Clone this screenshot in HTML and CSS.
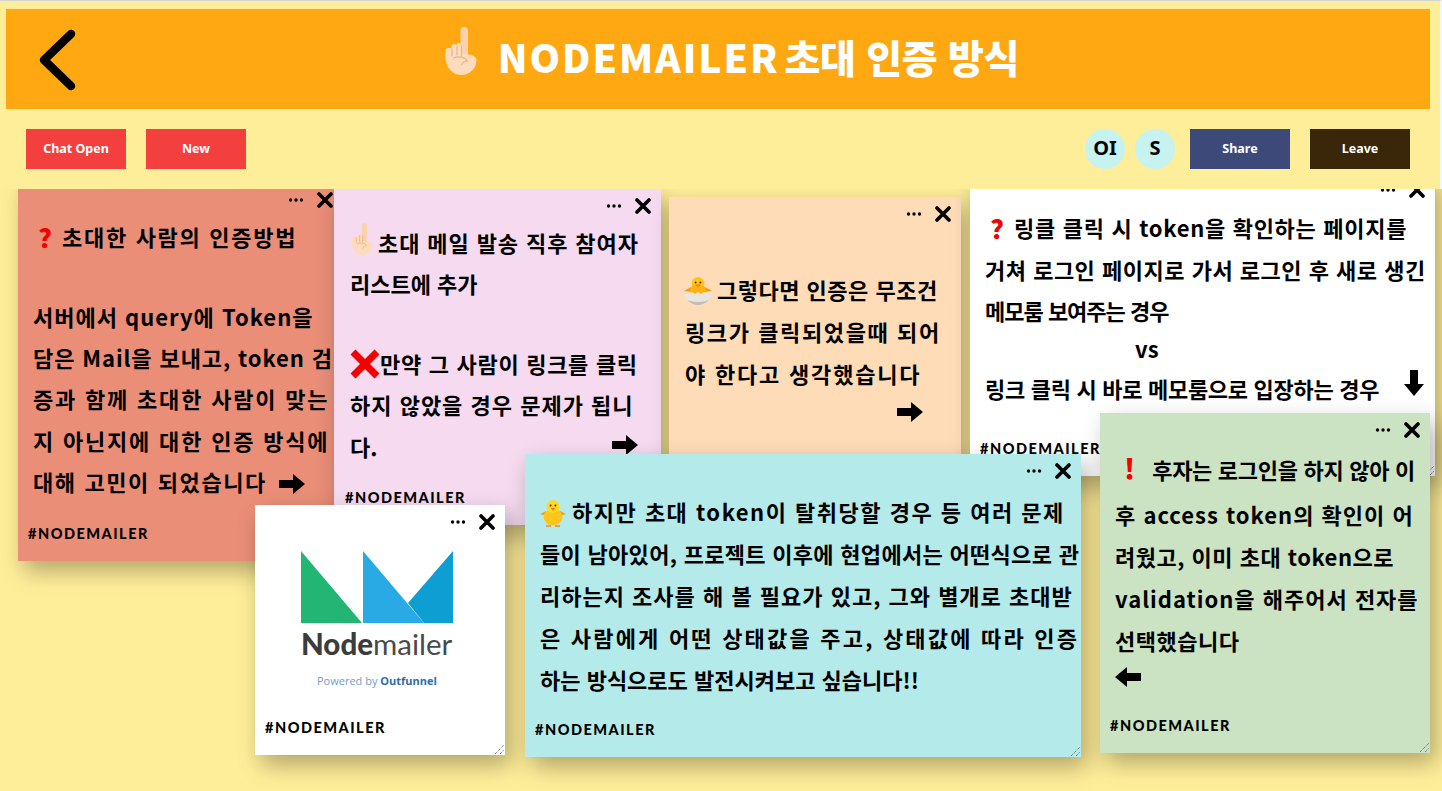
FILE: index.html
```html
<!DOCTYPE html>
<html lang="ko">
<head>
<meta charset="utf-8">
<title>Nodemailer 초대 인증 방식</title>
<link rel="stylesheet" href="styles.css">
</head>
<body>
<svg class="defs" width="0" height="0" aria-hidden="true">
  <defs>
    <symbol id="hand" viewBox="0 0 34 48">
      <rect x="17" y="0" width="7.5" height="30" rx="3.7" fill="#fad2ad"/>
      <rect x="2" y="21" width="7" height="14" rx="3" fill="#fcdcbd"/>
      <rect x="8" y="17" width="5.5" height="14" rx="2.7" fill="#fcdcbd"/>
      <rect x="13" y="16" width="5.5" height="14" rx="2.7" fill="#fcdcbd"/>
      <path d="M2 29c0-2 31-5 31 4 0 9-8 15-15 15C9 48 2 41 2 29z" fill="#fcdcbd"/>
      <path d="M8.5 22v7M13.5 19v9M18 19v10M10 31c5-2 12-1 14 3-3 0-5 1-6 4" fill="none" stroke="#e9b48a" stroke-width="1.2" stroke-linecap="round"/>
    </symbol>
    <symbol id="arrow" viewBox="0 0 26 20">
      <polygon points="0,6 14,6 14,0 26,10 14,20 14,14 0,14" fill="#000"/>
    </symbol>
    <symbol id="cross" viewBox="0 0 30 30">
      <path d="M3 3 27 27M27 3 3 27" stroke="#f40000" stroke-width="7" fill="none"/>
    </symbol>
    <symbol id="chick" viewBox="0 0 30 30">
      <path d="M2 16l6-3 1 5zM28 16l-6-3-1 5z" fill="#f59b10"/>
      <ellipse cx="15" cy="19" rx="9.5" ry="8.5" fill="#ffc61a"/>
      <circle cx="15" cy="8.5" r="6.5" fill="#ffd92a"/>
      <circle cx="12.6" cy="7.5" r="1" fill="#4a3010"/>
      <circle cx="17.4" cy="7.5" r="1" fill="#4a3010"/>
      <path d="M12.6 10h4.8L15 13z" fill="#f47c10"/>
      <path d="M8 28h5M17 28h5" stroke="#ef8a20" stroke-width="1.5"/>
    </symbol>
    <symbol id="hatch" viewBox="0 0 30 30">
      <path d="M1 15l7-4 1 5zM29 15l-7-4-1 5z" fill="#f59b10"/>
      <circle cx="15" cy="7.5" r="6.5" fill="#ffc61a"/>
      <ellipse cx="15" cy="14" rx="8" ry="6" fill="#ffb414"/>
      <circle cx="12.6" cy="6.5" r="1" fill="#4a3010"/>
      <circle cx="17.4" cy="6.5" r="1" fill="#4a3010"/>
      <path d="M12.8 8.5h4.4L15 11.5z" fill="#f47c10"/>
      <path d="M1 17l5 1 3-2 3 2 3-2 3 2 3-2 3 2 5-1c0 7-6 12-14 12S1 24 1 17z" fill="#e9e6e0"/>
      <path d="M4 24c3 3 7 5 11 5s8-2 11-5c-3 1-7 2-11 2s-8-1-11-2z" fill="#c3bdb2"/>
    </symbol>
    <symbol id="menu" viewBox="0 0 16 4">
      <circle cx="2.5" cy="2" r="1.7" fill="#000"/>
      <circle cx="8" cy="2" r="1.7" fill="#000"/>
      <circle cx="13.5" cy="2" r="1.7" fill="#000"/>
    </symbol>
    <symbol id="close" viewBox="0 0 16 16">
      <path d="M2 2 14 14M14 2 2 14" stroke="#000" stroke-width="3.6" stroke-linecap="round" fill="none"/>
    </symbol>
    <symbol id="grip" viewBox="0 0 10 10">
      <path d="M0 9 9 0M5 9 9 5" stroke="#555" stroke-width="1" stroke-dasharray="1 1" fill="none"/>
    </symbol>
  </defs>
</svg>

<div class="top">
  <header class="banner">
    <svg class="back" viewBox="0 0 40 62"><path d="M33 5 6 31 33 57" fill="none" stroke="#000" stroke-width="8.5" stroke-linecap="round" stroke-linejoin="round"/></svg>
    <h1 class="title"><svg class="title-hand"><use href="#hand"/></svg><span class="title-latin">NODEMAILER</span> <span class="title-ko">초대 인증 방식</span></h1>
  </header>
  <div class="toolbar">
    <button class="btn btn-red">Chat Open</button>
    <button class="btn btn-red">New</button>
    <div class="spacer"></div>
    <span class="avatar">OI</span>
    <span class="avatar">S</span>
    <button class="btn btn-share">Share</button>
    <button class="btn btn-leave">Leave</button>
  </div>
</div>

<main class="board">
  <article class="note n1">
    <div class="ctl"><svg class="ic-menu"><use href="#menu"/></svg><svg class="ic-close"><use href="#close"/></svg></div>
    <div class="text">
      <p class="line ls-17 ind"><span class="red-q">?</span>초대한 사람의 인증방법</p>
      <p class="line blank">&nbsp;</p>
      <p class="line ls-10">서버에서 query에 Token을</p>
      <p class="line ls-09">담은 Mail을 보내고, token 검</p>
      <p class="line ls-18">증과 함께 초대한 사람이 맞는</p>
      <p class="line ls-18">지 아닌지에 대한 인증 방식에</p>
      <p class="line ls-16">대해 고민이 되었습니다<svg class="ic-arrow gap-s"><use href="#arrow"/></svg></p>
    </div>
    <div class="tag">#NODEMAILER</div>
    <svg class="grip"><use href="#grip"/></svg>
  </article>

  <article class="note n2">
    <div class="ctl"><svg class="ic-menu"><use href="#menu"/></svg><svg class="ic-close"><use href="#close"/></svg></div>
    <div class="text">
      <p class="line ls-09"><svg class="em-hand"><use href="#hand"/></svg>초대 메일 발송 직후 참여자</p>
      <p class="line">리스트에 추가</p>
      <p class="line blank">&nbsp;</p>
      <p class="line ls-07"><svg class="em-cross"><use href="#cross"/></svg>만약 그 사람이 링크를 클릭</p>
      <p class="line ls-10">하지 않았을 경우 문제가 됩니</p>
      <p class="line last-row">다.<svg class="ic-arrow"><use href="#arrow"/></svg></p>
    </div>
    <div class="tag">#NODEMAILER</div>
  </article>

  <article class="note n3">
    <div class="ctl"><svg class="ic-menu"><use href="#menu"/></svg><svg class="ic-close"><use href="#close"/></svg></div>
    <div class="text">
      <p class="line ls-05"><svg class="em-chick"><use href="#hatch"/></svg>그렇다면 인증은 무조건</p>
      <p class="line ls-16">링크가 클릭되었을때 되어</p>
      <p class="line ls-18">야 한다고 생각했습니다</p>
      <p class="arrow-row"><svg class="ic-arrow"><use href="#arrow"/></svg></p>
    </div>
  </article>

  <article class="note n4">
    <div class="ctl"><svg class="ic-menu"><use href="#menu"/></svg><svg class="ic-close"><use href="#close"/></svg></div>
    <div class="text">
      <p class="line ls-07 ind"><span class="red-q">?</span>링클 클릭 시 token을 확인하는 페이지를</p>
      <p class="line ls-05">거쳐 로그인 페이지로 가서 로그인 후 새로 생긴</p>
      <p class="line ls-m10 tight">메모룸 보여주는 경우</p>
      <p class="line vs">vs</p>
      <p class="line ls-m03 last-row">링크 클릭 시 바로 메모룸으로 입장하는 경우<svg class="ic-down"><use href="#arrow"/></svg></p>
    </div>
    <div class="tag">#NODEMAILER</div>
    <svg class="grip"><use href="#grip"/></svg>
  </article>

  <article class="note n7">
    <div class="ctl"><svg class="ic-menu"><use href="#menu"/></svg><svg class="ic-close"><use href="#close"/></svg></div>
    <div class="logo">
      <svg class="logo-mark" viewBox="0 0 152 72">
        <polygon points="0,0 0,72 61,72" fill="#23b573"/>
        <polygon points="152,0 152,72 123,72 107,52" fill="#0d9fd2"/>
        <polygon points="62,0 62,72 123,72" fill="#2aaae5"/>
      </svg>
      <div class="logo-name"><b>Node</b>mailer</div>
      <div class="logo-by">Powered by <b>Outfunnel</b></div>
    </div>
    <div class="tag">#NODEMAILER</div>
    <svg class="grip"><use href="#grip"/></svg>
  </article>

  <article class="note n6">
    <div class="ctl"><svg class="ic-menu"><use href="#menu"/></svg><svg class="ic-close"><use href="#close"/></svg></div>
    <div class="text">
      <p class="line ls-15"><svg class="em-chick"><use href="#chick"/></svg>하지만 초대 token이 탈취당할 경우 등 여러 문제</p>
      <p class="line ls-03">들이 남아있어, 프로젝트 이후에 현업에서는 어떤식으로 관</p>
      <p class="line ls-10">리하는지 조사를 해 볼 필요가 있고, 그와 별개로 초대받</p>
      <p class="line ls-22">은 사람에게 어떤 상태값을 주고, 상태값에 따라 인증</p>
      <p class="line">하는 방식으로도 발전시켜보고 싶습니다!!</p>
    </div>
    <div class="tag">#NODEMAILER</div>
    <svg class="grip"><use href="#grip"/></svg>
  </article>

  <article class="note n5">
    <div class="ctl"><svg class="ic-menu"><use href="#menu"/></svg><svg class="ic-close"><use href="#close"/></svg></div>
    <div class="text">
      <p class="line ls-m03 tall"><span class="red-e">!</span>후자는 로그인을 하지 않아 이</p>
      <p class="line ls-10">후 access token의 확인이 어</p>
      <p class="line ls-05">려웠고, 이미 초대 token으로</p>
      <p class="line ls-10">validation을 해주어서 전자를</p>
      <p class="line ls-05">선택했습니다</p>
      <p class="arrow-left"><svg class="ic-left"><use href="#arrow"/></svg></p>
    </div>
    <div class="tag">#NODEMAILER</div>
    <svg class="grip"><use href="#grip"/></svg>
  </article>
</main>
</body>
</html>
```
FILE: styles.css
```css
* { box-sizing: border-box; }
html, body { margin: 0; height: 100%; }
body {
  background: #ffee99;
  font-family: "Noto Sans CJK KR", "Noto Sans", sans-serif;
  color: #000;
  overflow: hidden;
}
.defs { position: absolute; }

.top {
  position: relative;
  z-index: 10;
  height: 189px;
  background: #ffee99;
  border-top: 1px solid #d4d4d0;
  border-right: 2px solid #f6f6f4;
  padding: 8px 10px 0 6px;
}
.banner {
  display: flex;
  align-items: center;
  justify-content: center;
  position: relative;
  height: 100px;
  background: #ffa812;
}
.back { position: absolute; left: 32px; top: 20px; width: 40px; height: 62px; }
.title {
  display: flex;
  align-items: center;
  margin: 0 0 6px 26px;
  color: #fff;
  font-size: 39px;
  font-weight: 900;
  line-height: 48px;
}
.title-hand { width: 35px; height: 48px; margin: -10px 20px 0 0; }
.title-latin { letter-spacing: 1.9px; margin-right: 5px; }
.title-ko { letter-spacing: -0.3px; }

.toolbar {
  display: flex;
  align-items: center;
  gap: 20px;
  margin-top: 20px;
  padding: 0 20px;
  height: 40px;
}
.spacer { flex: 1; }
.btn {
  width: 100px;
  height: 40px;
  border: 0;
  padding: 0 0 2px;
  color: #fff;
  font: 700 12.5px "Noto Sans", sans-serif;
}
.btn-red { background: #f43f3f; }
.btn-share { background: #3d4a79; margin-left: -5px; }
.btn-leave { background: #3a2608; }
.avatar {
  width: 40px;
  height: 40px;
  border-radius: 50%;
  background: #c6f2f0;
  display: flex;
  align-items: center;
  justify-content: center;
  padding-bottom: 3px;
  font: 700 20px "Noto Sans", sans-serif;
}
.avatar + .avatar { margin-left: -10px; }

.board { position: relative; }
.note {
  position: absolute;
  display: flex;
  flex-direction: column;
  box-shadow: 6px 10px 22px rgba(0, 0, 0, 0.3);
  padding-bottom: 20px;
}
.n1 { left: 18px; top: -6px; width: 325px; height: 378px; background: #ea8e78; padding-left: 15px; }
.n2 { left: 334px; top: 0; width: 327px; height: 336px; background: #f5daf0; padding-left: 16px; }
.n3 { left: 669px; top: 8px; width: 292px; height: 300px; background: #ffdcb8; padding-left: 16px; }
.n4 { left: 970px; top: -16px; width: 465px; height: 303px; background: #fff; padding-left: 15px; }
.n5 { left: 1100px; top: 224px; width: 330px; height: 340px; background: #cbe3c3; padding-left: 15px; }
.n6 { left: 525px; top: 265px; width: 556px; height: 303px; background: #b5eaea; padding-left: 15px; }
.n7 { left: 255px; top: 316px; width: 250px; height: 250px; background: #fff; padding-left: 10px; }

.ctl {
  position: absolute;
  top: 9px;
  right: 10px;
  display: flex;
  align-items: center;
  gap: 13px;
}
.ic-menu { width: 16px; height: 4px; }
.ic-close { width: 16px; height: 16px; }
.grip { position: absolute; right: 0; bottom: 0; width: 10px; height: 10px; }

.text { padding-top: 33px; flex: 1; min-height: 0; }
.n3 .text { padding-top: 71px; }
.n6 .text { padding-top: 36px; }
.n4 .text { padding-top: 33px; }
.n5 .text { padding-top: 28px; }

.line {
  margin: 0;
  font-size: 22px;
  font-weight: 700;
  line-height: 42px;
  height: 42px;
  white-space: nowrap;
}
.n1 .line, .n2 .line { line-height: 41.3px; height: 41.3px; }
.n1 .blank, .n2 .blank { height: 38.5px; }

.ls-m10 { letter-spacing: -1px; }
.ls-m03 { letter-spacing: -0.3px; }
.ls-03 { letter-spacing: 0.3px; }
.ls-05 { letter-spacing: 0.5px; }
.ls-07 { letter-spacing: 0.7px; }
.ls-09 { letter-spacing: 0.9px; }
.ls-10 { letter-spacing: 1px; }
.ls-15 { letter-spacing: 1.5px; }
.ls-16 { letter-spacing: 1.6px; }
.ls-17 { letter-spacing: 1.7px; }
.ls-18 { letter-spacing: 1.8px; }
.ls-22 { letter-spacing: 2.2px; }

.ind { padding-left: 5px; }
.tall { height: 52px; line-height: 52px; }
.tight { height: 40px; line-height: 40px; }
.vs { padding-left: 150px; height: 37px; line-height: 37px; }
.last-row { display: flex; align-items: center; position: relative; }
.last-row .ic-arrow { margin-left: 235px; margin-top: -2px; }

.red-q { color: #f40000; font-size: 26px; font-weight: 900; vertical-align: -2px; margin-right: 10px; letter-spacing: 0; }
.red-e { color: #f40000; font-size: 28px; font-weight: 900; padding-left: 9px; margin-right: 17px; letter-spacing: 0; }

.ic-arrow { width: 26px; height: 20px; vertical-align: -3px; }
.gap-s { margin-left: 12px; }
.ic-down { position: absolute; left: 416px; top: 6px; width: 26px; height: 20px; transform: rotate(90deg); }
.ic-left { width: 26px; height: 20px; transform: rotate(180deg); display: block; }
.arrow-row { margin: 0; padding-left: 212px; height: 36px; display: flex; align-items: center; }
.arrow-left { margin: 6px 0 0 0; }
.em-hand { width: 24px; height: 32px; vertical-align: -3px; margin-right: 4px; }
.em-cross { width: 30px; height: 30px; vertical-align: -6px; }
.em-chick { width: 30px; height: 30px; vertical-align: -7px; margin-left: -2px; margin-right: 4px; }

.tag {
  font-family: "Lato", sans-serif;
  font-weight: 900;
  font-size: 14.5px;
  line-height: 14px;
  letter-spacing: 1.5px;
  margin-top: auto;
  margin-left: -5px;
}
.n7 .tag { margin-left: 0; }

.logo { margin: 46px 0 0 36px; width: 152px; flex: 1; }
.logo-mark { display: block; width: 152px; height: 72px; }
.logo-name {
  font-family: "Lato", sans-serif;
  font-size: 29.5px;
  line-height: 38px;
  margin-top: 2px;
  color: #4a4a4a;
  white-space: nowrap;
}
.logo-name b { color: #3c3c3c; font-weight: 900; }
.logo-by {
  font-family: "Open Sans", sans-serif;
  font-size: 11px;
  line-height: 14px;
  margin-top: 11px;
  padding-left: 16px;
  color: #6f9dc6;
  white-space: nowrap;
}
.logo-by b { color: #2c6ea8; }
```
